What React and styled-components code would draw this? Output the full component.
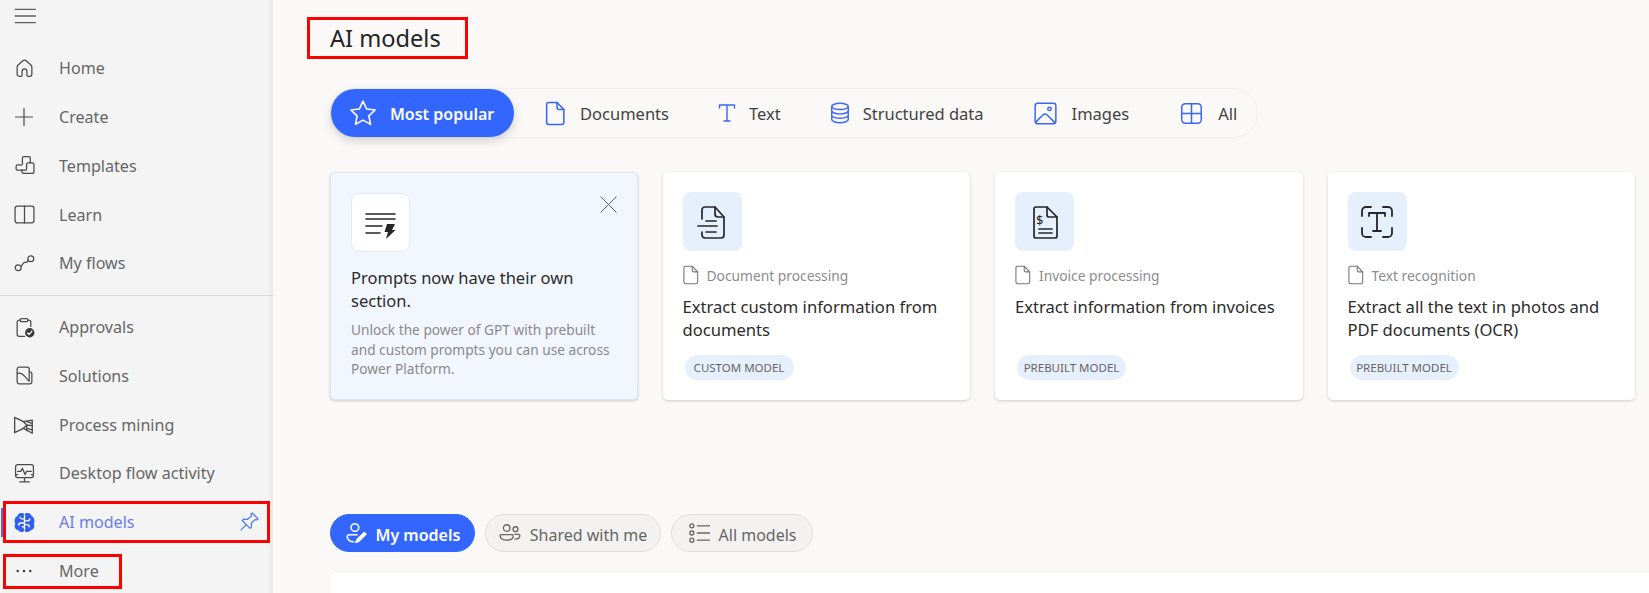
import React from "react";
import styled, { createGlobalStyle } from "styled-components";

const GlobalStyle = createGlobalStyle`
  html, body { margin: 0; padding: 0; height: 100%; background: #faf9f8; }
  body { font-family: "Noto Sans", "Open Sans", sans-serif; overflow: hidden; }
`;

const Svg = ({ size = 20, vb = 20, children, ...rest }) => (
  <svg width={size} height={size} viewBox={`0 0 ${vb} ${vb}`} fill="none" stroke="currentColor" strokeWidth="1.2" strokeLinecap="round" strokeLinejoin="round" {...rest}>
    {children}
  </svg>
);

const MenuIcon = () => (
  <Svg size={22}><path d="M1 4h18.500M1 10h18.500M1 16h18.500" /></Svg>
);
const HomeIcon = () => (
  <Svg size={21}><path d="M8.400 2.700a2.400 2.400 0 0 1 3.200 0l4.500 3.900a2.400 2.400 0 0 1 .9 1.800V15.400a2 2 0 0 1-2 2h-1.700a1 1 0 0 1-1-1V12.600a2.300 2.300 0 0 0-4.600 0v3.800a1 1 0 0 1-1 1H5a2 2 0 0 1-2-2V8.400a2.400 2.400 0 0 1 .9-1.800z" /></Svg>
);
const PlusIcon = () => (
  <Svg><path d="M10 1.500v17M1.500 10h17" /></Svg>
);
const TemplatesIcon = () => (
  <Svg size={21}><path d="M9.500 1.500H14a1.500 1.500 0 0 1 1.500 1.500v4.500h2A1.500 1.500 0 0 1 19 9V16a1.500 1.500 0 0 1-1.500 1.500H9A1.500 1.500 0 0 1 7.500 16v-1.500H3.500A1.500 1.500 0 0 1 2 13v-2a1.500 1.500 0 0 1 1.500-1.500H6A1.500 1.500 0 0 0 8 7.500V3A1.500 1.500 0 0 1 9.500 1.500z" /><path d="M7.500 14.500h3A1.500 1.500 0 0 0 12 13V9a1.500 1.500 0 0 1 1.500-1.500h2" /></Svg>
);
const BookIcon = () => (
  <Svg size={21}><rect x="1" y="2" width="18" height="16" rx="2.200" /><path d="M10 2v16" /></Svg>
);
const FlowsIcon = () => (
  <Svg size={21}><circle cx="4" cy="14" r="2.800" /><circle cx="16" cy="5.500" r="2.800" /><path d="M6.500 12.800c1.500-.8 1.800-3.300 3.500-3.800s2.300 .5 3.700-2" /></Svg>
);
const ApprovalsIcon = () => (
  <Svg size={21}>
    <path d="M6 3H5a2 2 0 0 0-2 2v11.500a2 2 0 0 0 2 2h5M13 3h1a2 2 0 0 1 2 2v4" />
    <rect x="6" y="1.500" width="7" height="3" rx="1" />
    <circle cx="15" cy="15" r="4.500" fill="#3b3b3b" stroke="none" />
    <path d="M13 15.200l1.500 1.400 2.500-3" stroke="#fff" />
  </Svg>
);
const SolutionsIcon = () => (
  <Svg size={21}><path d="M5 2h7.500a2 2 0 0 1 2 2v2.500h.5a2 2 0 0 1 2 2V16a2 2 0 0 1-2 2H5a2 2 0 0 1-2-2V4a2 2 0 0 1 2-2z" /><path d="M3 8c3-1 5 0 7 2.500s3 4 4.500 5M14.500 6.500V15" /></Svg>
);
const MiningIcon = () => (
  <Svg size={22}><path d="M1.500 3l8 4 8-1.500v12L9.500 13 1.500 17z" /><path d="M9.500 7l3 3v5M9.500 13l3-3 5 .5M12.500 7l5 1.500M12.500 13l5 1.500" /></Svg>
);
const DesktopIcon = () => (
  <Svg size={21}><rect x="1.500" y="1.500" width="17" height="12.500" rx="2" /><path d="M3.500 8h3l1.500-3 2.500 6 1.500-3h4.500M10 14v3.500M5.500 18h9M1.500 11h2M16.500 11h2" /></Svg>
);
const BrainIcon = () => (
  <Svg size={21} strokeWidth="1.300">
    <path d="M7 1c1.100 0 2.200.5 3 1.200C10.800 1.500 11.900 1 13 1c1.900 0 3.300 1.200 3.700 2.900 1.600.7 2.800 2.400 2.800 4.600 0 1-.3 1.900-.8 2.700.5.800.8 1.700.6 2.800-.3 1.700-1.500 2.900-3 3.200-.7 1-1.900 1.800-3.300 1.800-1.200 0-2.200-.5-3-1.200-.8.700-1.800 1.200-3 1.200-1.400 0-2.600-.8-3.300-1.800-1.500-.3-2.700-1.500-3-3.200-.2-1.100.1-2 .6-2.800C.8 10.400.500 9.500.500 8.500.500 6.300 1.700 4.600 3.300 3.900 3.700 2.200 5.100 1 7 1z" fill="#2f5fee" stroke="none" />
    <path d="M10 3v14M10 6.500H7.500A1.800 1.800 0 0 1 5.700 5M10 10.500H6.500A2 2 0 0 0 4.500 12.500M10 14H8M10 8.500h3a2 2 0 0 0 2-2M10 12h2.500a2 2 0 0 1 2 2" stroke="#fff" />
  </Svg>
);
const PinIcon = () => (
  <Svg size={21}>
    <path d="M12.500 1.800l5.700 5.700-1 1-2-.3-3.500 3.500.2 3.600-1.300 1.200-7.500-7.500 1.300-1.300 3.500.3L12.200 4.500 11.500 2.800zM6.500 13.500L2 18" />
  </Svg>
);

const StarIcon = () => (
  <Svg size={30} vb={24} strokeWidth="1.300">
    <path d="M12 2.500l2.900 6.300 6.800.8-5 4.700 1.300 6.800-6-3.400-6 3.400 1.300-6.800-5-4.700 6.800-.8z" />
  </Svg>
);
const FileIcon = ({ size = 25, width = 1.500 }) => (
  <Svg size={size} vb={24} strokeWidth={width}>
    <path d="M5.500 1.500h8l6.500 6.700v12.300a2 2 0 0 1-2 2H5.500a2 2 0 0 1-2-2v-17a2 2 0 0 1 2-2z" />
    <path d="M13.500 1.500v5a1.700 1.700 0 0 0 1.700 1.700H20" />
  </Svg>
);
const TextIcon = () => (
  <Svg size={20} strokeWidth="1.400">
    <path d="M2.500 5V2h15v3M10 2v16M7 18h6" />
  </Svg>
);
const DatabaseIcon = () => (
  <Svg size={22} strokeWidth="1.300">
    <ellipse cx="10" cy="4" rx="7.500" ry="2.800" />
    <path d="M2.500 4v12c0 1.500 3.300 2.800 7.500 2.800s7.500-1.300 7.500-2.800V4M2.500 8c0 1.500 3.300 2.800 7.500 2.800s7.500-1.300 7.500-2.800M2.500 12c0 1.500 3.300 2.800 7.500 2.800s7.500-1.300 7.500-2.800" />
  </Svg>
);
const ImageIcon = () => (
  <Svg size={23} strokeWidth="1.300">
    <rect x="1" y="1" width="18" height="18" rx="2.200" />
    <circle cx="13.500" cy="6" r="1.500" />
    <path d="M1.500 17.500l6-6a3 3 0 0 1 4.200 0l6 6" />
  </Svg>
);
const GridIcon = () => (
  <Svg size={23} strokeWidth="1.300">
    <rect x="1.500" y="1.500" width="17" height="17" rx="3" />
    <path d="M10 1.500v17M1.500 10h17" />
  </Svg>
);

const PromptIcon = () => (
  <Svg size={32} vb={32} strokeWidth="1.600">
    <path d="M1 7h29M1 12h29M1 19h16M1 26h14" />
    <path d="M22 17h8l-3 6h3.500L21 32l2-7h-3.500z" fill="#262626" stroke="none" />
  </Svg>
);
const DocLinesIcon = () => (
  <Svg size={34} vb={34} strokeWidth="1.700">
    <path d="M7 14V5a3 3 0 0 1 3-3h10l9 10v18a3 3 0 0 1-3 3H10a3 3 0 0 1-3-3v-3" />
    <path d="M20 2v7a3 3 0 0 0 3 3h6M3 21h19M11 16h10M11 27h10" />
  </Svg>
);
const InvoiceIcon = () => (
  <Svg size={34} vb={34} strokeWidth="1.700">
    <path d="M8 2h11l10 10v19a2 2 0 0 1-2 2H8a2 2 0 0 1-2-2V4a2 2 0 0 1 2-2z" />
    <path d="M19 2v8a2 2 0 0 0 2 2h8M11 24h13M11 28h13" />
    <text x="8" y="20" fontSize="13" fill="#262626" stroke="none" fontFamily="Noto Sans">$</text>
  </Svg>
);
const ScanTextIcon = () => (
  <Svg size={34} vb={34} strokeWidth="1.800">
    <path d="M2 11V6a4 4 0 0 1 4-4h5M23 2h5a4 4 0 0 1 4 4v5M2 23v5a4 4 0 0 0 4 4h5M32 23v5a4 4 0 0 1-4 4h-5" />
    <path d="M9 11V8h16v3M17 8v18M13 26h8" />
  </Svg>
);
const CloseIcon = () => (
  <Svg size={17} strokeWidth="1.100"><path d="M1 1l18 18M19 1L1 19" /></Svg>
);

const UserEditIcon = () => (
  <Svg size={22} strokeWidth="1.400">
    <circle cx="9" cy="5" r="3.500" />
    <path d="M11 11.500H4a2 2 0 0 0-2 2c0 2.500 2.500 4.500 6 4.500" />
    <path d="M17.500 9.500l1.500 1.500-6.500 6.500-2.500 1 1-2.500z" fill="currentColor" />
  </Svg>
);
const PeopleIcon = () => (
  <Svg size={22} strokeWidth="1.200">
    <circle cx="7" cy="5.500" r="3" />
    <circle cx="15" cy="6.500" r="2.200" />
    <path d="M2 11.500h10a1 1 0 0 1 1 1c0 2.500-2.500 4-6 4s-6-1.500-6-4a1 1 0 0 1 1-1zM14.500 15.500c2.500 0 4.500-1 4.500-3.200a1 1 0 0 0-1-1h-3.500" />
  </Svg>
);
const ListIcon = () => (
  <Svg size={22} strokeWidth="1.200">
    <circle cx="3.500" cy="3.500" r="1.800" />
    <circle cx="3.500" cy="10" r="1.800" />
    <circle cx="3.500" cy="16.500" r="1.800" />
    <path d="M8.500 3.500H20M8.500 10H20M8.500 16.500H20" />
  </Svg>
);
const DotsIcon = () => (
  <Svg size={18}>
    <circle cx="3" cy="10" r="1.300" fill="#333" stroke="none" />
    <circle cx="10" cy="10" r="1.300" fill="#333" stroke="none" />
    <circle cx="17" cy="10" r="1.300" fill="#333" stroke="none" />
  </Svg>
);

const Page = styled.div`
  display: grid;
  grid-template-columns: 273px 1fr;
  height: 593px;
  overflow: hidden;
`;

const Sidebar = styled.nav`
  background: #f4f4f4;
  box-shadow: inset -6px 0 5px -4px #e6e6e6;
  display: flex;
  flex-direction: column;
`;

const MenuButton = styled.div`
  height: 32px;
  margin-bottom: 12px;
  padding-left: 14px;
  display: flex;
  align-items: center;
  color: #616161;
`;

const Divider = styled.div`
  height: 1px;
  background: #d9d9d9;
  margin: 7px 0;
`;

const NavRow = styled.div`
  position: relative;
  flex: none;
  height: 48.750px;
  display: flex;
  align-items: center;
  font-size: 16.100px;
  color: ${(p) => (p.$active ? "#6a7cf0" : "#666")};
`;

const NavIcon = styled.span`
  width: 59px;
  flex: none;
  display: flex;
  justify-content: center;
  padding-right: 11px;
  box-sizing: border-box;
  color: ${(p) => (p.$active ? "#2f5fee" : "#4a4a4a")};
`;

const ActiveBar = styled.span`
  position: absolute;
  left: 1px;
  top: 10px;
  width: 3px;
  height: 29px;
  background: #4f6bed;
`;

const PinSlot = styled.span`
  position: absolute;
  left: 239px;
  top: 13px;
  display: flex;
  color: #4f7bf5;
`;

const Highlight = styled.span`
  position: absolute;
  left: 3px;
  top: ${(p) => p.$top}px;
  width: ${(p) => p.$width}px;
  height: ${(p) => p.$height}px;
  border: 3px solid #f00;
  box-sizing: border-box;
`;

const Main = styled.main`
  background: #faf9f8;
  padding: 17px 0 0 57px;
  min-width: 0;
`;

const Title = styled.h1`
  display: block;
  width: 161px;
  height: 42px;
  box-sizing: border-box;
  margin: 0 0 29px -23px;
  padding-left: 20px;
  border: 3px solid #f00;
  font-size: 23.600px;
  font-weight: 400;
  line-height: 37px;
  color: #242424;
`;

const TabBar = styled.div`
  display: flex;
  align-items: center;
  width: 928px;
  height: 50px;
  box-sizing: border-box;
  border: 1px solid #f0efee;
  border-radius: 25px;
  margin-bottom: 34px;
`;

const Tab = styled.div`
  display: flex;
  align-items: center;
  height: 48px;
  font-size: 16.500px;
  color: #424242;
  margin-left: ${(p) => p.$gap}px;
  gap: ${(p) => p.$iconGap}px;

  svg { color: #3a66f5; flex: none; }
`;

const TabLabel = styled.span`
  padding-top: 1px;
`;

const ActiveTab = styled(Tab)`
  width: 183px;
  box-sizing: border-box;
  margin-left: 0;
  padding-left: 17px;
  gap: 12px;
  background: #3366ff;
  border-radius: 24px;
  color: #fff;
  font-size: 16px;
  font-weight: 600;
  box-shadow: 0 4px 10px rgba(0, 0, 0, 0.16);

  svg { color: #fff; }
`;

const Cards = styled.div`
  display: flex;
  gap: 25px;
  margin-bottom: 114px;
`;

const Card = styled.article`
  position: relative;
  flex: none;
  width: 307.500px;
  height: 228px;
  box-sizing: border-box;
  padding: 20px;
  border-radius: 5px;
  background: ${(p) => (p.$promo ? "#f2f6ff" : "#fff")};
  border: ${(p) => (p.$promo ? "1px solid #dbe5fa" : "none")};
  box-shadow: 0 1px 3px rgba(0, 0, 0, 0.18);
  display: flex;
  flex-direction: column;
`;

const IconTile = styled.div`
  width: 59px;
  height: 59px;
  border-radius: 8px;
  display: flex;
  align-items: center;
  justify-content: center;
  color: #262626;
  background: ${(p) => (p.$promo ? "#fff" : "#e6effc")};
  border: ${(p) => (p.$promo ? "1px solid #e1e9fb" : "none")};
  box-sizing: border-box;
`;

const CloseButton = styled.span`
  position: absolute;
  right: 20px;
  top: 23px;
  display: flex;
  color: #555;
`;

const PromoHeading = styled.h3`
  margin: 14px 0 0;
  font-size: 16.500px;
  font-weight: 400;
  line-height: 23px;
  color: #2b2b2b;
`;

const PromoBody = styled.p`
  margin: 8px 0 0;
  font-size: 13.700px;
  line-height: 19.500px;
  color: #8a8a8a;
`;

const Meta = styled.div`
  display: flex;
  align-items: center;
  gap: 6px;
  height: 20px;
  margin-top: 14px;
  font-size: 13.800px;
  color: #8c8c8c;

  svg { color: #777; margin-left: -2px; }
`;

const CardTitle = styled.h3`
  margin: 11px 0 0;
  height: 45px;
  font-size: 16.600px;
  font-weight: 400;
  line-height: 22.500px;
  color: #2b2b2b;
`;

const Tag = styled.span`
  align-self: flex-start;
  margin: 14px 0 0 2px;
  height: 25px;
  width: 109px;
  border-radius: 13px;
  background: #e6effc;
  display: flex;
  align-items: center;
  justify-content: center;
  font-size: 11.500px;
  color: #666;
`;

const Pills = styled.div`
  display: flex;
  gap: 10px;
  margin-bottom: 20px;
`;

const Pill = styled.div`
  display: flex;
  align-items: center;
  justify-content: center;
  gap: 9px;
  width: ${(p) => p.$width}px;
  height: 38px;
  box-sizing: border-box;
  border-radius: 19px;
  font-size: 16px;
  color: ${(p) => (p.$active ? "#fff" : "#666")};
  background: ${(p) => (p.$active ? "#3366ff" : "#f3f2f1")};
  border: 1px solid ${(p) => (p.$active ? "#3366ff" : "#dedede")};
  font-weight: ${(p) => (p.$active ? 600 : 400)};
`;

const PillLabel = styled.span`
  padding-top: 3px;
`;

const ListPanel = styled.div`
  height: 60px;
  margin-right: -20px;
  background: #fff;
  border-radius: 8px 0 0 0;
  box-shadow: 0 0 2px rgba(0, 0, 0, 0.06);
`;

const navTop = [
  ["Home", <HomeIcon />],
  ["Create", <PlusIcon />],
  ["Templates", <TemplatesIcon />],
  ["Learn", <BookIcon />],
  ["My flows", <FlowsIcon />],
];

const navBottom = [
  ["Approvals", <ApprovalsIcon />],
  ["Solutions", <SolutionsIcon />],
  ["Process mining", <MiningIcon />],
  ["Desktop flow activity", <DesktopIcon />],
];

const tabs = [
  ["Documents", <FileIcon />, 29, 12],
  ["Text", <TextIcon />, 48, 12],
  ["Structured data", <DatabaseIcon />, 48, 12],
  ["Images", <ImageIcon />, 50, 15],
  ["All", <GridIcon />, 51, 15],
];

const models = [
  {
    icon: <DocLinesIcon />,
    meta: "Document processing",
    title: "Extract custom information from documents",
    tag: "CUSTOM MODEL",
  },
  {
    icon: <InvoiceIcon />,
    meta: "Invoice processing",
    title: "Extract information from invoices",
    tag: "PREBUILT MODEL",
  },
  {
    icon: <ScanTextIcon />,
    meta: "Text recognition",
    title: "Extract all the text in photos and PDF documents (OCR)",
    tag: "PREBUILT MODEL",
  },
];

export default function App() {
  return (
    <>
      <GlobalStyle />
      <Page>
        <Sidebar>
          <MenuButton><MenuIcon /></MenuButton>
          {navTop.map(([label, icon]) => (
            <NavRow key={label}><NavIcon>{icon}</NavIcon>{label}</NavRow>
          ))}
          <Divider />
          {navBottom.map(([label, icon]) => (
            <NavRow key={label}><NavIcon>{icon}</NavIcon>{label}</NavRow>
          ))}
          <NavRow $active>
            <ActiveBar />
            <NavIcon $active><BrainIcon /></NavIcon>
            AI models
            <PinSlot><PinIcon /></PinSlot>
            <Highlight $top={3} $width={267} $height={42} />
          </NavRow>
          <NavRow>
            <NavIcon><DotsIcon /></NavIcon>
            More
            <Highlight $top={7} $width={119} $height={35} />
          </NavRow>
        </Sidebar>
        <Main>
          <Title>AI models</Title>
          <TabBar>
            <ActiveTab><StarIcon /><TabLabel>Most popular</TabLabel></ActiveTab>
            {tabs.map(([label, icon, gap, iconGap]) => (
              <Tab key={label} $gap={gap} $iconGap={iconGap}>{icon}<TabLabel>{label}</TabLabel></Tab>
            ))}
          </TabBar>
          <Cards>
            <Card $promo>
              <IconTile $promo><PromptIcon /></IconTile>
              <CloseButton><CloseIcon /></CloseButton>
              <PromoHeading>Prompts now have their own section.</PromoHeading>
              <PromoBody>Unlock the power of GPT with prebuilt and custom prompts you can use across Power Platform.</PromoBody>
            </Card>
            {models.map((m) => (
              <Card key={m.meta}>
                <IconTile>{m.icon}</IconTile>
                <Meta><FileIcon size={20} width={1.300} />{m.meta}</Meta>
                <CardTitle>{m.title}</CardTitle>
                <Tag>{m.tag}</Tag>
              </Card>
            ))}
          </Cards>
          <Pills>
            <Pill $active $width={145}><UserEditIcon /><PillLabel>My models</PillLabel></Pill>
            <Pill $width={176}><PeopleIcon /><PillLabel>Shared with me</PillLabel></Pill>
            <Pill $width={142}><ListIcon /><PillLabel>All models</PillLabel></Pill>
          </Pills>
          <ListPanel />
        </Main>
      </Page>
    </>
  );
}
